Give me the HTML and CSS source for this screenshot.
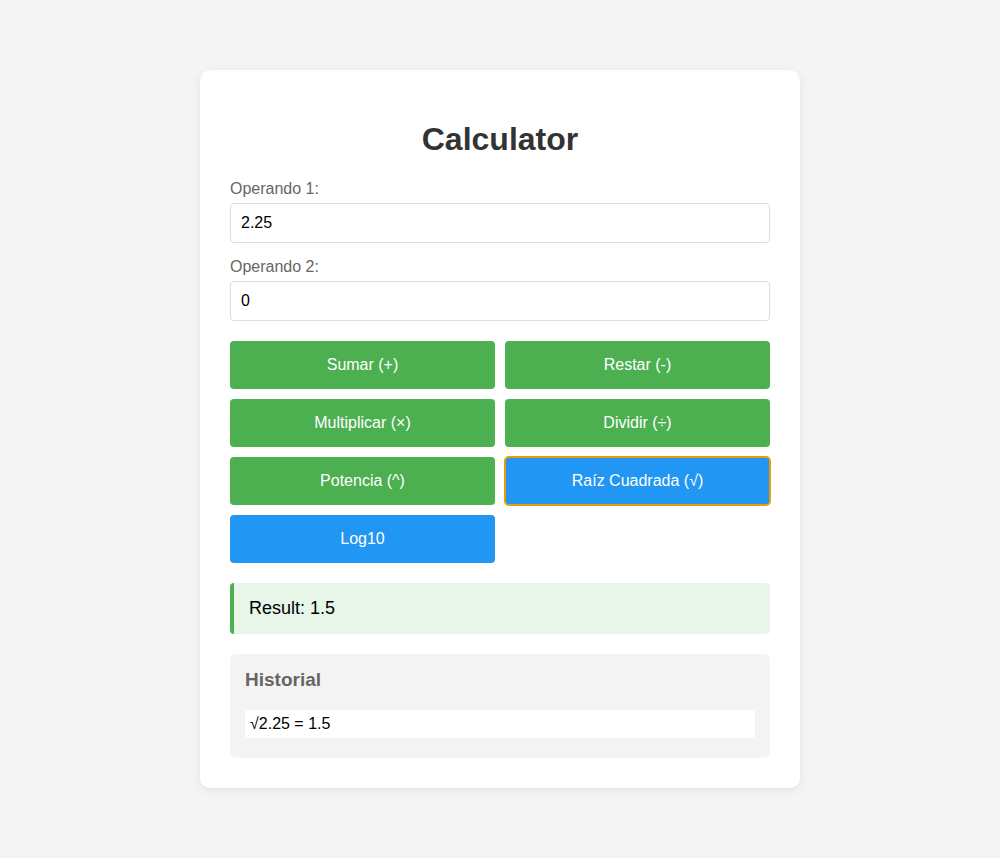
FILE: index.html
```html
<html><head>
<meta name="viewport" content="width=device-width, initial-scale=1">
<link rel="stylesheet" href="styles.css"></head><body>

<div class="calculator">
  <h1>Calculator</h1>
  <div class="field">
    <label for="op1">Operando 1:</label>
    <input type="text" id="op1" value="2.25">
  </div>
  <div class="field">
    <label for="op2">Operando 2:</label>
    <input type="text" id="op2" value="0">
  </div>

  <div class="buttons">
    <button class="btn">Sumar (+)</button>
    <button class="btn">Restar (-)</button>
    <button class="btn">Multiplicar (×)</button>
    <button class="btn">Dividir (÷)</button>
    <button class="btn">Potencia (^)</button>
    <button class="btn btnSpecial active">Raíz Cuadrada (√)</button>
    <button class="btn btnSpecial">Log10</button>
  </div>

  <div class="result">Result: 1.5</div>

  <div class="history">
    <h3>Historial</h3>
    <ul>
      <li>√2.25 = 1.5</li>
    </ul>
  </div>
</div>

</body></html>
```

FILE: styles.css
```css
body {
    font-family: "Liberation Sans", Arial, Helvetica, sans-serif;
    background-color: #f4f4f4;
    margin: 0;
    min-height: 100vh;
    display: flex;
    align-items: center;
    justify-content: center;
}

.calculator {
    width: 540px;
    background-color: #fff;
    padding: 30px;
    border-radius: 10px;
    box-shadow: 0 2px 8px rgba(0, 0, 0, 0.08);
}

h1 {
    text-align: center;
    color: #333;
    font-size: 32px;
    margin: 21px 0 22px;
}

.field {margin-bottom: 15px;}
.field label {
    display: block;
    color: #666;
    font-size: 16px;
    margin-bottom: 5px;
}
.field input {
    width: 100%;
    padding: 10px;
    font-size: 16px;
    font-family: inherit;
    border: 1px solid #ddd;
    border-radius: 4px;
    box-sizing: border-box;
    color: #000;
}

.buttons {
    display: grid;
    grid-template-columns: 1fr 1fr;
    gap: 10px;
    margin-top: 20px;
}
.btn {
    background-color: #4CAF50;
    color: white;
    padding: 15px;
    font-size: 16px;
    font-family: inherit;
    border: none;
    border-radius: 4px;
    cursor: pointer;
}
.btn:hover {opacity: 0.8;}
.btnSpecial {background-color: #2196F3;}
.btn.active {
    outline: 2px solid #e69d0c;
    outline-offset: -1px;
}

.result {
    margin-top: 20px;
    padding: 15px;
    font-size: 18px;
    background-color: #e8f5e9;
    border-left: 4px solid #4CAF50;
    border-radius: 4px;
}

.history {
    margin-top: 20px;
    padding: 15px;
    background-color: #f4f4f4;
    border-radius: 6px;
}
.history h3 {
    margin: 0 0 19px;
    font-size: 19px;
    color: #666;
}
.history ul {
    list-style: none;
    margin: 0;
    padding: 0;
}
.history li {
    background-color: #fff;
    padding: 5px;
    margin: 5px 0;
    border-radius: 3px;
    font-size: 16px;
}
```
